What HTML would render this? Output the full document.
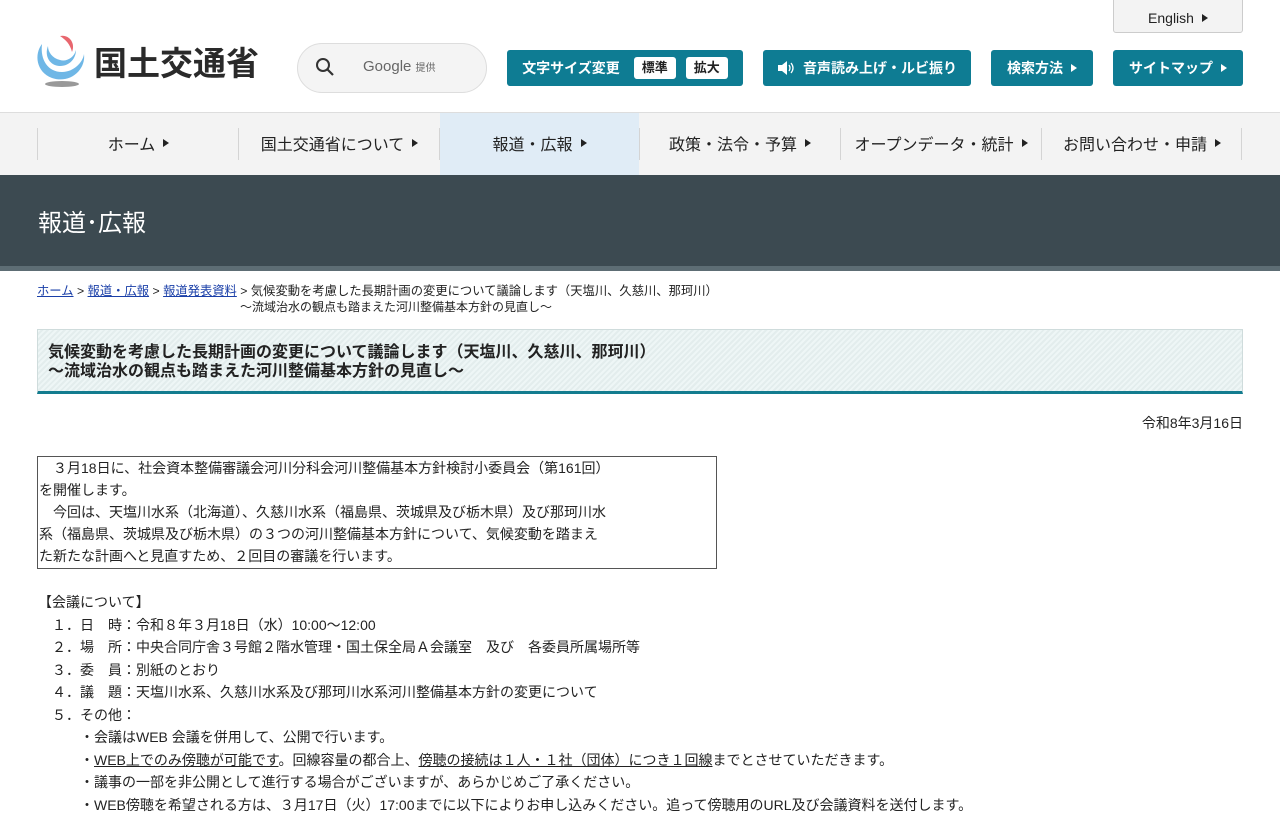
<!DOCTYPE html>
<html lang="ja"><head><meta charset="utf-8">
<style>
*{margin:0;padding:0;box-sizing:border-box}
body{width:1280px;height:800px;overflow:hidden;background:#fff;font-family:"Liberation Sans","Noto Sans CJK JP",sans-serif;color:#222;position:relative}
.abs{position:absolute}
.btn{position:absolute;background:#0e7c93;color:#fff;border-radius:3px;font-size:14px;font-weight:bold;display:flex;align-items:center;justify-content:center;height:36px;top:50px}
.tri{display:inline-block;width:0;height:0;border-left:6px solid currentColor;border-top:4.5px solid transparent;border-bottom:4.5px solid transparent;margin-left:8px}
.nav{position:absolute;top:112px;left:0;width:1280px;height:63px;background:#f3f3f3;border-top:1px solid #ddd}
.ni{position:absolute;top:0;height:60px;display:flex;align-items:center;justify-content:center;font-size:16px;color:#222}
.dv{position:absolute;top:15px;width:1px;height:32px;background:#d4d4d4}
.tag{background:#fff;color:#222;border-radius:3px;padding:0 8px;height:22px;line-height:22px;font-size:13px;margin-left:10px}
.t14{font-size:14px;line-height:22px;position:absolute;white-space:nowrap}
a{color:#1a3fa8}
</style></head><body>
<!-- logo -->
<svg class="abs" style="left:34px;top:30px" width="56" height="58" viewBox="0 0 56 58">
<path d="M8 14 C0 24 2 42 18 48 C36 54 52 40 50 24 C49 32 40 42 28 42 C14 42 6 30 8 14Z" fill="#6fb7e6"/>
<path d="M14 16 C10 26 16 36 26 36 C36 36 42 28 42 20 C40 28 32 32 26 30 C18 28 14 22 14 16Z" fill="#6fb7e6"/>
<path d="M26 6 C34 4 42 12 38 22 C36 14 32 10 26 6Z" fill="#e8666e"/>
<ellipse cx="28" cy="54" rx="17" ry="3" fill="#999"/>
</svg>
<div class="abs" style="left:94px;top:37px;font-size:33px;color:#2a2a2a;font-weight:bold">国土交通省</div>
<!-- search -->
<div class="abs" style="left:297px;top:43px;width:190px;height:50px;border:1px solid #ddd;border-radius:25px;background:#f4f4f4"></div>
<svg class="abs" style="left:315px;top:57px" width="20" height="20" viewBox="0 0 20 20"><circle cx="8" cy="8" r="6" fill="none" stroke="#333" stroke-width="2"/><line x1="12.5" y1="12.5" x2="18" y2="18" stroke="#333" stroke-width="2.2"/></svg>
<div class="abs" style="left:363px;top:58px;font-size:15px;color:#666">Google <span style="font-size:10px">提供</span></div>
<!-- English -->
<div class="abs" style="left:1113px;top:-4px;width:130px;height:37px;background:#f3f3f3;border:1px solid #ccc;border-radius:3px;display:flex;align-items:center;justify-content:center;font-size:14px;padding-top:6px">English<span class="tri"></span></div>
<!-- buttons -->
<div class="btn" style="left:507px;width:236px">文字サイズ変更<span class="tag" style="margin-left:14px">標準</span><span class="tag">拡大</span></div>
<div class="btn" style="left:763px;width:208px"><svg width="18" height="16" viewBox="0 0 18 16" style="margin-right:8px"><path d="M1 5h4l5-4v14l-5-4H1z" fill="#fff"/><path d="M12 5q2 3 0 6M14 3q4 5 0 10" stroke="#fff" fill="none" stroke-width="1.3"/></svg>音声読み上げ・ルビ振り</div>
<div class="btn" style="left:991px;width:102px">検索方法<span class="tri"></span></div>
<div class="btn" style="left:1113px;width:130px">サイトマップ<span class="tri"></span></div>
<!-- nav -->
<div class="nav">
<div class="ni" style="left:440px;width:199px;height:62px;background:#e0ecf6"></div>
<div class="dv" style="left:37px"></div><div class="dv" style="left:238px"></div><div class="dv" style="left:439px"></div><div class="dv" style="left:639px"></div><div class="dv" style="left:840px"></div><div class="dv" style="left:1041px"></div><div class="dv" style="left:1241px"></div>
<div class="ni" style="left:38px;width:201px">ホーム<span class="tri"></span></div>
<div class="ni" style="left:239px;width:201px">国土交通省について<span class="tri"></span></div>
<div class="ni" style="left:440px;width:199px">報道・広報<span class="tri"></span></div>
<div class="ni" style="left:640px;width:200px">政策・法令・予算<span class="tri"></span></div>
<div class="ni" style="left:841px;width:200px">オープンデータ・統計<span class="tri"></span></div>
<div class="ni" style="left:1042px;width:200px">お問い合わせ・申請<span class="tri"></span></div>
</div>
<!-- band -->
<div class="abs" style="left:0;top:175px;width:1280px;height:91px;background:#3c4a51"></div>
<div class="abs" style="left:0;top:266px;width:1280px;height:5px;background:#5d6d74"></div>
<div class="abs" style="left:38px;top:203px;font-size:24px;color:#fff">報道･広報</div>
<!-- breadcrumb -->
<div class="abs" style="left:37px;top:283px;font-size:12.3px;line-height:16px;white-space:nowrap"><a href="#">ホーム</a> &gt; <a href="#">報道・広報</a> &gt; <a href="#">報道発表資料</a> &gt; 気候変動を考慮した長期計画の変更について議論します（天塩川、久慈川、那珂川）</div>
<div class="abs" style="left:240px;top:299px;font-size:12px;line-height:16px;white-space:nowrap">～流域治水の観点も踏まえた河川整備基本方針の見直し～</div>
<!-- title box -->
<div class="abs" style="left:37px;top:329px;width:1206px;height:65px;border:1px solid #cfdcdc;border-bottom:3px solid #137c8f;background:repeating-linear-gradient(135deg,#eef6f6 0 2px,#e3eded 2px 4px)"></div>
<div class="abs" style="left:48px;top:343px;font-size:16px;font-weight:bold;line-height:19px;white-space:nowrap">気候変動を考慮した長期計画の変更について議論します（天塩川、久慈川、那珂川）<br>～流域治水の観点も踏まえた河川整備基本方針の見直し～</div>
<div class="t14" style="right:37px;top:412px">令和8年3月16日</div>
<!-- summary box -->
<div class="abs" style="left:37px;top:456px;width:680px;height:113px;border:1px solid #555"></div>
<div class="t14" style="left:39px;top:457px">　３月18日に、社会資本整備審議会河川分科会河川整備基本方針検討小委員会（第161回）<br>を開催します。<br>　今回は、天塩川水系（北海道）、久慈川水系（福島県、茨城県及び栃木県）及び那珂川水<br>系（福島県、茨城県及び栃木県）の３つの河川整備基本方針について、気候変動を踏まえ<br>た新たな計画へと見直すため、２回目の審議を行います。</div>
<!-- details -->
<div class="t14" style="left:38px;top:591px;line-height:22.5px">【会議について】<br>
　１．日　時：令和８年３月18日（水）10:00～12:00<br>
　２．場　所：中央合同庁舎３号館２階水管理・国土保全局Ａ会議室　及び　各委員所属場所等<br>
　３．委　員：別紙のとおり<br>
　４．議　題：天塩川水系、久慈川水系及び那珂川水系河川整備基本方針の変更について<br>
　５．その他：<br>
　　　・会議はWEB 会議を併用して、公開で行います。<br>
　　　・<u>WEB上でのみ傍聴が可能です</u>。回線容量の都合上、<u>傍聴の接続は１人・１社（団体）につき１回線</u>までとさせていただきます。<br>
　　　・議事の一部を非公開として進行する場合がございますが、あらかじめご了承ください。<br>
　　　・WEB傍聴を希望される方は、３月17日（火）17:00までに以下によりお申し込みください。追って傍聴用のURL及び会議資料を送付します。</div>
</body></html>
